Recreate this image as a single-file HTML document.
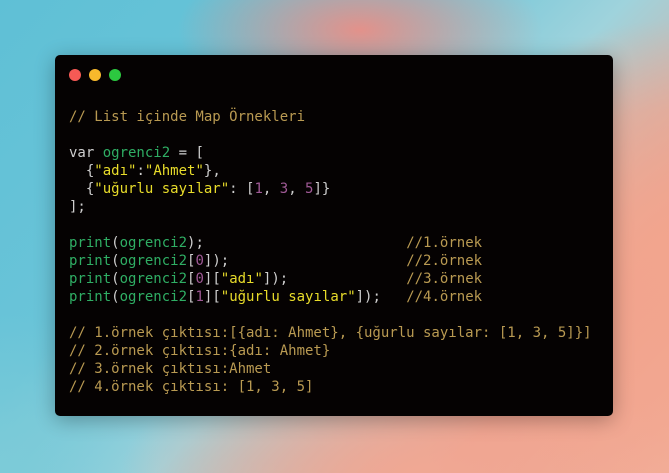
<!DOCTYPE html>
<html><head><meta charset="utf-8"><style>
html,body{margin:0;padding:0;}
body{width:669px;height:473px;overflow:hidden;position:relative;
background:
radial-gradient(ellipse 260px 120px at 360px 30px, rgba(240,140,130,0.9), transparent 70%),
radial-gradient(ellipse 300px 300px at 669px 260px, #f2a58e 0%, rgba(242,165,142,0.6) 50%, transparent 80%),
radial-gradient(ellipse 400px 160px at 420px 473px, #f0a894, transparent 75%),
radial-gradient(ellipse 200px 200px at 0px 473px, #7ccbd8, transparent 80%),
linear-gradient(135deg,#5fc0d6 0%,#6ac4d8 35%,#9fd3dc 55%,#ef9f8c 80%,#f3b09a 100%);}
.win{position:absolute;left:55px;top:55px;width:558px;height:361px;background:#050202;border-radius:5px;box-shadow:0 4px 20px rgba(0,0,0,0.3);}
.d{position:absolute;top:14px;width:12px;height:12px;border-radius:50%;}
pre{position:absolute;left:14px;top:53px;margin:0;font-family:"DejaVu Sans Mono","Liberation Mono",monospace;font-size:14px;line-height:18px;color:#cfcfcf;}
.c{color:#b99a52}.g{color:#2fae64}.s{color:#e8dc2a}.n{color:#a05a96}
</style></head><body>
<div class="win">
<div class="d" style="left:14px;background:#f65a55"></div>
<div class="d" style="left:34px;background:#f8b92c"></div>
<div class="d" style="left:54px;background:#2cc840"></div>
<pre><span class="c">// List içinde Map Örnekleri</span>

var <span class="g">ogrenci2</span> = [
  {<span class="s">"adı"</span>:<span class="s">"Ahmet"</span>},
  {<span class="s">"uğurlu sayılar"</span>: [<span class="n">1</span>, <span class="n">3</span>, <span class="n">5</span>]}
];

<span class="g">print</span>(<span class="g">ogrenci2</span>);                        <span class="c">//1.örnek</span>
<span class="g">print</span>(<span class="g">ogrenci2</span>[<span class="n">0</span>]);                     <span class="c">//2.örnek</span>
<span class="g">print</span>(<span class="g">ogrenci2</span>[<span class="n">0</span>][<span class="s">"adı"</span>]);              <span class="c">//3.örnek</span>
<span class="g">print</span>(<span class="g">ogrenci2</span>[<span class="n">1</span>][<span class="s">"uğurlu sayılar"</span>]);   <span class="c">//4.örnek</span>

<span class="c">// 1.örnek çıktısı:[{adı: Ahmet}, {uğurlu sayılar: [1, 3, 5]}]
// 2.örnek çıktısı:{adı: Ahmet}
// 3.örnek çıktısı:Ahmet
// 4.örnek çıktısı: [1, 3, 5]</span></pre>
</div>
</body></html>
